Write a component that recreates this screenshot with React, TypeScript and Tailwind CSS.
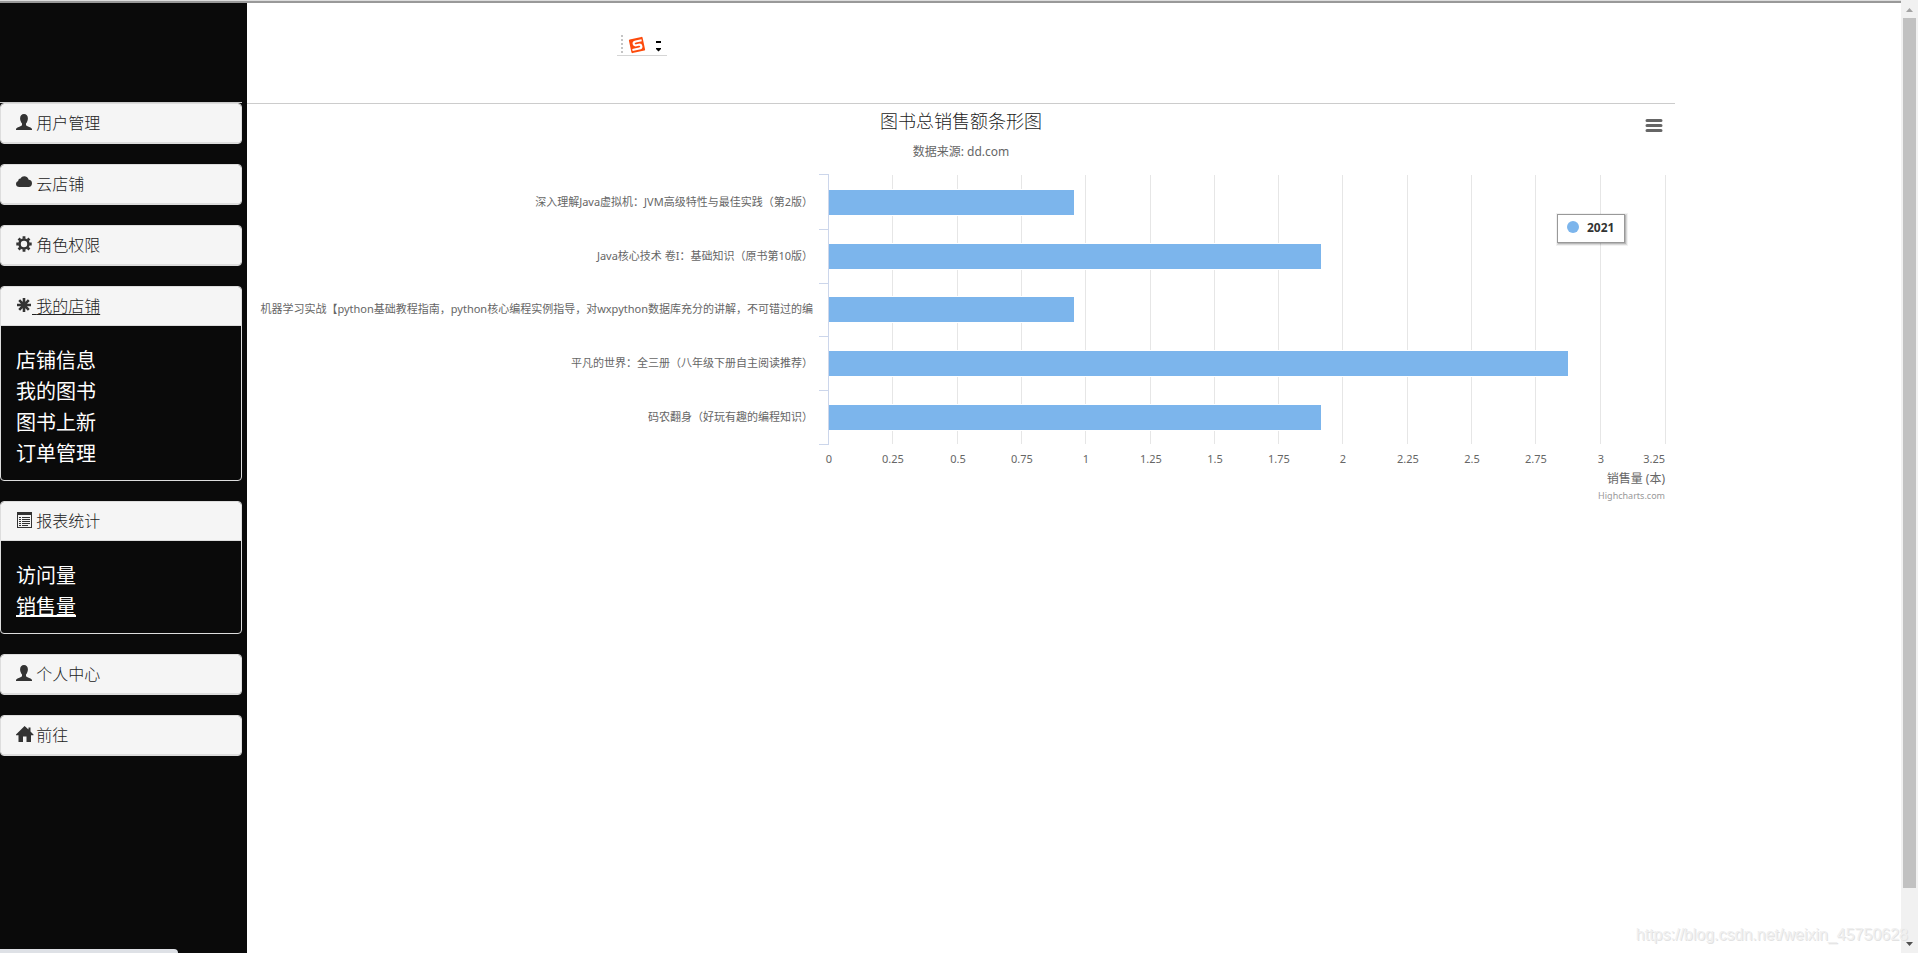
import { FunctionComponent, ReactNode } from "react";

type MenuItem = { label: string; active?: boolean };

type MenuGroup = {
  title: string;
  icon: ReactNode;
  underline?: boolean;
  items?: MenuItem[];
};

const UserIcon = () => (
  <svg className="w-4 h-4 shrink-0" viewBox="0 0 16 16" fill="currentColor" aria-hidden="true">
    <path d="M8 0C5.600 0 4.100 1.700 4.100 4.200c0 1.200.3 2.300.5 2.900.3 1.100.9 1.900 1.400 2.400v1.500c-.3.800-1.200 1.100-2.600 1.700C1.600 13.400 0 14 0 15.200V16h16v-.8c0-1.200-1.600-1.800-3.400-2.500-1.400-.6-2.300-.9-2.600-1.700V9.500c.5-.5 1.100-1.300 1.400-2.400.2-.6.5-1.700.5-2.900C11.900 1.700 10.400 0 8 0z" />
  </svg>
);

const CloudIcon = () => (
  <svg className="w-4 h-4 shrink-0" viewBox="0 0 16 16" fill="currentColor" aria-hidden="true">
    <path d="M3.400 12C1.400 12 0 10.600 0 8.900c0-1.400 1-2.500 2.200-2.900C2.100 4.400 3.300 3.400 4.600 3.500c.8-1.500 2-2.300 3.600-2.300 2.300 0 4.100 1.500 4.500 3.600 2 0 3.300 1.500 3.300 3.500 0 2.100-1.300 3.700-3.400 3.700z" />
  </svg>
);

const CogIcon = () => (
  <svg className="w-4 h-4 shrink-0" viewBox="0 0 16 16" fill="none" stroke="currentColor" aria-hidden="true">
    <circle cx="8" cy="8" r="4.500" strokeWidth="2.600" />
    <path
      d="M8 .3v2.500M8 13.200v2.500M.3 8h2.500M13.200 8h2.500M2.600 2.600l1.700 1.700M11.700 11.700l1.700 1.700M2.600 13.400l1.700-1.700M11.700 4.300l1.700-1.700"
      strokeWidth="2.800"
    />
  </svg>
);

const AsteriskIcon = () => (
  <svg className="w-4 h-4 shrink-0" viewBox="0 0 16 16" fill="none" stroke="currentColor" aria-hidden="true">
    <path d="M8 1v14M1 8h14M3.200 3.200l9.600 9.600M12.800 3.200l-9.600 9.600" strokeWidth="2.600" />
  </svg>
);

const ListIcon = () => (
  <svg className="w-4 h-4 shrink-0" viewBox="0 0 16 16" fill="currentColor" aria-hidden="true">
    <path fillRule="evenodd" d="M1 0h15v16H1zM2 3v12h13V3z" />
    <path d="M3 5h2v1H3zM6 5h8v1H6zM3 7h2v1H3zM6 7h8v1H6zM3 9h2v1H3zM6 9h8v1H6zM3 11h2v1H3zM6 11h8v1H6zM3 13h2v1H3zM6 13h6v1H6z" />
  </svg>
);

const HomeIcon = () => (
  <svg className="w-[18px] h-4 -mr-0.5 shrink-0" viewBox="0 0 18 16" fill="currentColor" aria-hidden="true">
    <path d="M8.600 0L0 8.500v.8h2.500V16H7v-5.500h3.500V16H15V9.300h2.500v-.8L14.500 5.500V1.500h-2v2z" />
  </svg>
);

const groups: MenuGroup[] = [
  { title: "用户管理", icon: <UserIcon /> },
  { title: "云店铺", icon: <CloudIcon /> },
  { title: "角色权限", icon: <CogIcon /> },
  {
    title: "我的店铺",
    icon: <AsteriskIcon />,
    underline: true,
    items: [
      { label: "店铺信息" },
      { label: "我的图书" },
      { label: "图书上新" },
      { label: "订单管理" },
    ],
  },
  {
    title: "报表统计",
    icon: <ListIcon />,
    items: [{ label: "访问量" }, { label: "销售量", active: true }],
  },
  { title: "个人中心", icon: <UserIcon /> },
  { title: "前往", icon: <HomeIcon /> },
];

const Panel: FunctionComponent<{ group: MenuGroup }> = ({ group }) => (
  <section className="border border-[#ddd] rounded overflow-hidden">
    <a
      href="#"
      className="flex items-center h-[39px] px-[15px] bg-[#f5f5f5] border-b border-[#ddd] text-[#222] text-base leading-[18px]"
    >
      <span className="pb-0.5 text-[#333]">{group.icon}</span>
      <span
        className={`whitespace-pre font-light font-['Noto_Sans','Noto_Sans_CJK_SC',sans-serif] ${group.underline ? "underline underline-offset-2" : ""}`}
      >
        {" "}
        {group.title}
      </span>
    </a>
    {group.items && (
      <ul className="px-[15px] pt-[18px] pb-3 text-xl leading-[31px] text-white">
        {group.items.map((item) => (
          <li key={item.label}>
            <a
              href="#"
              className={item.active ? "underline decoration-2 underline-offset-1" : ""}
            >
              {item.label}
            </a>
          </li>
        ))}
      </ul>
    )}
  </section>
);

const Sidebar = () => (
  <aside className="w-[247px] shrink-0 bg-[#0a0a0a] pr-[5px]">
    <div className="h-[100px] border-b border-[#ccc]" />
    <nav className="flex flex-col gap-5">
      {groups.map((group) => (
        <Panel key={group.title} group={group} />
      ))}
    </nav>
  </aside>
);

const ImeToolbar = () => (
  <svg className="w-[50px] h-6" viewBox="0 0 50 24" aria-hidden="true">
    <path d="M5 3v20" stroke="#c4c4c4" strokeWidth="2" strokeDasharray="2 2" fill="none" />
    <path d="M0 23.500h50" stroke="#d5d5d5" fill="none" />
    <g transform="rotate(-12 20 13)">
      <rect x="13" y="6" width="14" height="14" rx="1" fill="#fd4a0b" />
      <path
        d="M25.500 9.300h-6q-2.500 0-2.500 1.900t2.500 1.900h2q2.500 0 2.500 1.900t-2.500 1.900h-7"
        fill="none"
        stroke="#fff"
        strokeWidth="2.200"
      />
    </g>
    <path d="M39 9h5v2h-5zM39 16h5v1l-2.500 2.500L39 17z" fill="#000" />
  </svg>
);

const ticks = [
  { x: 645, label: "0.25" },
  { x: 710, label: "0.5" },
  { x: 774, label: "0.75" },
  { x: 838, label: "1" },
  { x: 903, label: "1.25" },
  { x: 967, label: "1.5" },
  { x: 1031, label: "1.75" },
  { x: 1095, label: "2" },
  { x: 1160, label: "2.25" },
  { x: 1224, label: "2.5" },
  { x: 1288, label: "2.75" },
  { x: 1353, label: "3" },
];

const bars = [
  { y: 86, width: 245, label: "深入理解Java虚拟机：JVM高级特性与最佳实践（第2版）" },
  { y: 140, width: 492, label: "Java核心技术 卷I：基础知识（原书第10版）" },
  {
    y: 193,
    width: 245,
    label: "机器学习实战【python基础教程指南，python核心编程实例指导，对wxpython数据库充分的讲解，不可错过的编",
  },
  { y: 247, width: 739, label: "平凡的世界：全三册（八年级下册自主阅读推荐）" },
  { y: 301, width: 492, label: "码农翻身（好玩有趣的编程知识）" },
];

const SalesChart = () => (
  <div className="relative">
    <svg className="block w-full font-['Noto_Sans','Noto_Sans_CJK_SC',sans-serif]" viewBox="0 0 1428 400">
      <text x="714" y="24" textAnchor="middle" fontSize="18" fontWeight="300" fill="#222">
        图书总销售额条形图
      </text>
      <text x="714" y="52" textAnchor="middle" fontSize="12" fill="#666">
        数据来源: dd.com
      </text>

      {ticks.map((tick) => (
        <g key={tick.label}>
          <path d={`M${tick.x + 0.5} 71v269`} stroke="#e6e6e6" />
          <text x={tick.x + 1} y="359" textAnchor="middle" fontSize="11" fill="#666">
            {tick.label}
          </text>
        </g>
      ))}
      <path d="M1418.500 71v269" stroke="#e6e6e6" />
      <text x="582" y="359" textAnchor="middle" fontSize="11" fill="#666">
        0
      </text>
      <text x="1418" y="359" textAnchor="end" fontSize="11" fill="#666">
        3.25
      </text>

      {bars.map((bar) => (
        <g key={bar.label}>
          <rect x="581" y={bar.y - 1} width={bar.width + 2} height="27" fill="#fff" />
          <rect x="582" y={bar.y} width={bar.width} height="25" fill="#7cb5ec" />
          <text x="566" y={bar.y + 16} textAnchor="end" fontSize="11" fill="#666">
            {bar.label}
          </text>
        </g>
      ))}
      <path
        d="M581.500 70v271M572 70.500h10M572 125.500h10M572 179.500h10M572 232.500h10M572 286.500h10M572 340.500h10"
        stroke="#ccd6eb"
        fill="none"
      />

      <rect x="1311.500" y="111.500" width="67" height="28" fill="none" stroke="#000" strokeOpacity="0.050" strokeWidth="5" />
      <rect x="1311.500" y="111.500" width="67" height="28" fill="none" stroke="#000" strokeOpacity="0.100" strokeWidth="3" />
      <rect x="1311.500" y="111.500" width="67" height="28" fill="none" stroke="#000" strokeOpacity="0.150" />
      <rect x="1310.500" y="110.500" width="67" height="28" fill="#fff" stroke="#999" />
      <circle cx="1326" cy="123" r="6" fill="#7cb5ec" />
      <text x="1340" y="128" fontSize="12" fontWeight="700" fill="#333">
        2021
      </text>

      <text x="1418" y="379" textAnchor="end" fontSize="12" fill="#666">
        销售量 (本)
      </text>
      <a href="#">
        <text x="1418" y="395" textAnchor="end" fontSize="9" fill="#999">
          Highcharts.com
        </text>
      </a>
    </svg>
    <button
      type="button"
      aria-label="Chart context menu"
      className="absolute top-2.5 right-2.5 w-6 h-[22px] cursor-pointer"
    >
      <svg className="w-6 h-[22px]" viewBox="0 0 24 22" aria-hidden="true">
        <path d="M6 6.500h14M6 11.500h14M6 16.500h14" stroke="#666" strokeWidth="3" strokeLinecap="round" />
      </svg>
    </button>
  </div>
);

const Scrollbar = () => (
  <div className="w-[17px] shrink-0 flex flex-col items-center bg-[#f1f1f1] pt-px">
    <svg className="w-[17px] h-[17px] shrink-0" viewBox="0 0 17 17" aria-hidden="true">
      <path d="M5 11h7L8.500 7z" fill="#a3a3a3" />
    </svg>
    <div className="flex-1 w-[13px]">
      <div className="h-[94.8%] bg-[#c1c1c1]" />
    </div>
    <svg className="w-[17px] h-[17px] shrink-0" viewBox="0 0 17 17" aria-hidden="true">
      <path d="M5 6h7l-3.500 4z" fill="#505050" />
    </svg>
  </div>
);

const App: FunctionComponent = () => {
  return (
    <div className="relative flex min-h-screen overflow-hidden bg-white font-['Noto_Sans_CJK_SC',sans-serif]">
      <div className="flex-1 min-w-0 flex flex-col">
        <div className="h-[3px] border-t border-[#ddd] bg-[#999]" />
        <div className="flex-1 flex">
          <Sidebar />
          <main className="flex-1 min-w-0 pr-[226px]">
            <header className="h-[101px] pt-[29px] pl-[370px] border-b border-[#ccc]">
              <ImeToolbar />
            </header>
            <SalesChart />
          </main>
        </div>
      </div>
      <Scrollbar />
      <div className="absolute bottom-0 left-0 w-[178px] h-1 rounded-tr bg-[#dee1e6]" />
      <p className="absolute bottom-2 right-2.5 text-base leading-5 text-[#f0f0f0] [text-shadow:1px_1px_0_#e2e2e2] font-['Liberation_Sans',sans-serif]">
        https://blog.csdn.net/weixin_45750628
      </p>
    </div>
  );
};

export default App;
